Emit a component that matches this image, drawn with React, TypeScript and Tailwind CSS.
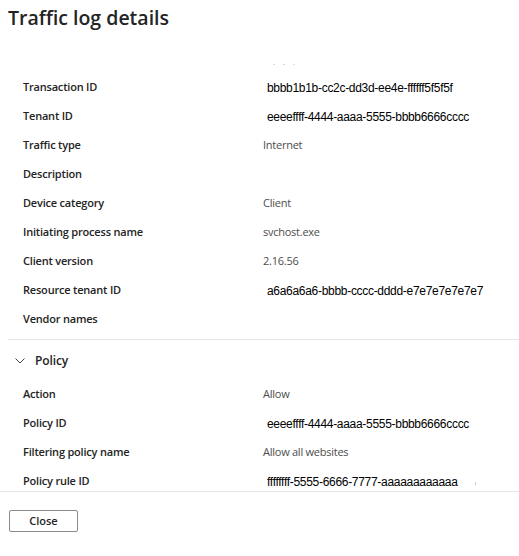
import React from "react"

type Row = { label: string; value?: string; guid?: boolean; tick?: boolean }

const details: Row[] = [
  { label: "Transaction ID", value: "bbbb1b1b-cc2c-dd3d-ee4e-ffffff5f5f5f", guid: true },
  { label: "Tenant ID", value: "eeeeffff-4444-aaaa-5555-bbbb6666cccc", guid: true },
  { label: "Traffic type", value: "Internet" },
  { label: "Description" },
  { label: "Device category", value: "Client" },
  { label: "Initiating process name", value: "svchost.exe" },
  { label: "Client version", value: "2.16.56" },
  { label: "Resource tenant ID", value: "a6a6a6a6-bbbb-cccc-dddd-e7e7e7e7e7e7", guid: true },
  { label: "Vendor names" },
]

const policy: Row[] = [
  { label: "Action", value: "Allow" },
  { label: "Policy ID", value: "eeeeffff-4444-aaaa-5555-bbbb6666cccc", guid: true },
  { label: "Filtering policy name", value: "Allow all websites" },
  { label: "Policy rule ID", value: "ffffffff-5555-6666-7777-aaaaaaaaaaaa", guid: true, tick: true },
]

function DetailRow({ row }: { row: Row }) {
  return (
    <div className="flex items-center h-[29px] pl-[23px]">
      <div className="w-[240px] shrink-0 text-[11px] font-semibold text-[#242424] tracking-[-0.2px]">
        {row.label}
      </div>
      {row.value &&
        (row.guid ? (
          <div className="ml-[4px] flex items-center whitespace-nowrap text-[12px] text-black font-['Liberation_Sans',sans-serif] tracking-[-0.3px]">
            {row.value}
            {row.tick && <span className="ml-[17px] w-[1px] h-[3px] mt-[4px] bg-[#c8c8c8]" />}
          </div>
        ) : (
          <div className="text-[11px] text-[#4d4d4d] tracking-[-0.25px]">{row.value}</div>
        ))}
    </div>
  )
}

export default function App() {
  return (
    <div className="w-[519px] h-[556px] bg-white font-['Open_Sans',sans-serif] flex flex-col overflow-hidden">
      <h1 className="px-[8px] pt-[3px] text-[19.5px] font-semibold text-[#242424] leading-[30px]">
        Traffic log details
      </h1>

      <div className="flex-1 overflow-hidden">
        {/* faint scroll remnant */}
        <div className="h-[40px] flex items-start pl-[273px] gap-[8px] pt-[31px]">
          <span className="w-[2px] h-[1px] bg-[#dcdcdc]" />
          <span className="w-[2px] h-[1px] bg-[#d4d4d4]" />
          <span className="w-[2px] h-[1px] bg-[#e2e2e2]" />
        </div>

        <div className="flex flex-col">
          {details.map((r) => (
            <DetailRow key={r.label} row={r} />
          ))}
        </div>

        <div className="ml-[8px] mt-[5px] border-t border-[#e6e6e6]" />

        <div className="flex items-center h-[42px] pl-[15px] gap-[10px]">
          <svg width="10" height="6" viewBox="0 0 10 6" fill="none">
            <path d="M0.5 0.5 L5 5 L9.5 0.5" stroke="#424242" strokeWidth="1" />
          </svg>
          <span className="text-[12px] font-semibold text-[#242424] tracking-[-0.1px]">Policy</span>
        </div>

        <div className="flex flex-col mt-[-2px]">
          {policy.map((r) => (
            <DetailRow key={r.label} row={r} />
          ))}
        </div>
      </div>

      <div className="border-t border-[#e6e6e6] h-[65px] shrink-0 pt-[15px] pl-[9px]">
        <button className="w-[69px] h-[22px] border border-[#8a8a8a] rounded-[2px] bg-white text-[11px] font-semibold text-[#242424] leading-none">
          Close
        </button>
      </div>
    </div>
  )
}
